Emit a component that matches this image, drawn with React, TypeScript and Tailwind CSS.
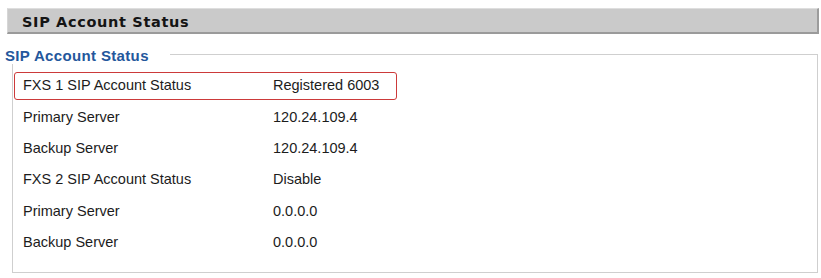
import React from "react";

type Row = { label: string; value: string; highlight?: boolean };

const rows: Row[] = [
  { label: "FXS 1 SIP Account Status", value: "Registered 6003", highlight: true },
  { label: "Primary Server", value: "120.24.109.4" },
  { label: "Backup Server", value: "120.24.109.4" },
  { label: "FXS 2 SIP Account Status", value: "Disable" },
  { label: "Primary Server", value: "0.0.0.0" },
  { label: "Backup Server", value: "0.0.0.0" },
];

export default function App() {
  return (
    <div className="w-[821px] h-[278px] bg-white overflow-hidden font-['Liberation_Sans',Arial,sans-serif]">
      {/* Page title bar */}
      <div className="pt-[8px] pl-[7px]">
        <div className="w-[812px] h-[26px] bg-[#cacaca] border-t border-l border-t-[#dedede] border-l-[#d6d6d6] border-r-2 border-b-2 border-r-[#9c9c9c] border-b-[#9a9a9a] flex items-center pl-[14px] pt-[3px]">
          <span className="font-['DejaVu_Sans',Verdana,sans-serif] font-bold text-[14.5px] tracking-[0.65px] text-[#141414] leading-none">
            SIP Account Status
          </span>
        </div>
      </div>

      {/* Status group */}
      <div className="relative mt-[20px] ml-[12px] w-[806px] h-[219px] border border-[#cfcfcf] pt-[15px]">
        <div className="absolute left-[-9px] top-[-9px] w-[166px] h-[18px] bg-white flex items-center">
          <span className="text-[15px] font-bold text-[#24579c] tracking-[0.35px] leading-none pl-[1px]">
            SIP Account Status
          </span>
        </div>

        <div className="flex flex-col">
          {rows.map((r, i) => (
            <div key={i} className="h-[31.3px] flex items-center ml-[1px]">
              <div
                className={
                  r.highlight
                    ? "w-[383px] h-[28px] flex items-center border border-[#cc3a3a] rounded-[3px] pl-[8px]"
                    : "w-[383px] h-[28px] flex items-center border border-transparent pl-[8px]"
                }
              >
                <span className="w-[250px] text-[14.5px] text-[#1c1c1c] leading-none">{r.label}</span>
                <span className="text-[14.5px] text-[#1c1c1c] leading-none">{r.value}</span>
              </div>
            </div>
          ))}
        </div>
      </div>
    </div>
  );
}
